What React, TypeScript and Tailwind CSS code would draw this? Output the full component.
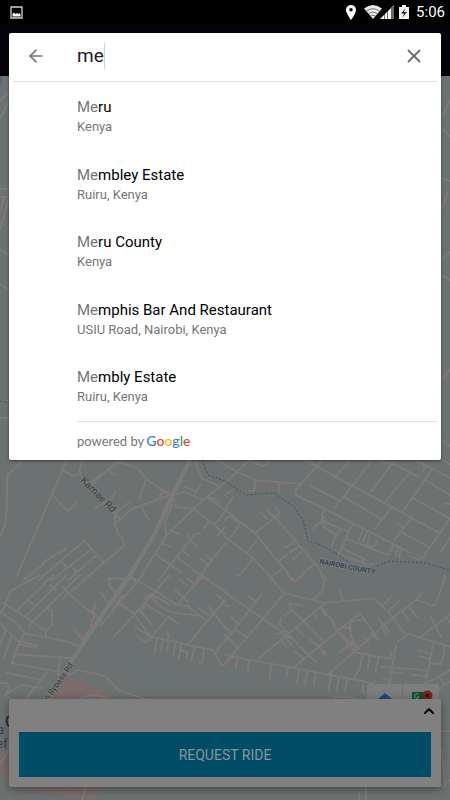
import { useState } from 'react';
import { ArrowLeft, ChevronUp, X } from 'lucide-react';

interface Place {
  match: string;
  rest: string;
  area: string;
}

const places: Place[] = [
  { match: 'Me', rest: 'ru', area: 'Kenya' },
  { match: 'Me', rest: 'mbley Estate', area: 'Ruiru, Kenya' },
  { match: 'Me', rest: 'ru County', area: 'Kenya' },
  { match: 'Me', rest: 'mphis Bar And Restaurant', area: 'USIU Road, Nairobi, Kenya' },
  { match: 'Me', rest: 'mbly Estate', area: 'Ruiru, Kenya' },
];

// Street lines, split into map tiles. Each tile is drawn at three times its size.
const westStreets =
  'M70 15L22 60L20 170L16 210L0 245 M200 15L52 360 M248 15L238 45L245 68 M190 48L220 62L242 58 M245 68L350 185 M352 20L280 85 M305 52L272 88 M328 47L345 62 M352 20L415 40L438 72L490 108L520 120 M438 72L418 132 M158 120L203 170L230 142 M345 108L338 130L285 158 M390 140L350 172 M345 175L345 205L352 230L370 255L372 272L310 325L250 375 M350 202L395 162L470 135L510 120 M425 152L432 172L447 195 M490 105L480 126L500 126 M345 175L358 190 M115 375L253 257L290 298L312 325 M70 375L130 328L130 322L198 280 M155 375L275 282 M185 320L200 338 M215 335L230 352 M290 300L205 375 M675 82L602 142L500 240L415 375 M585 20L605 70L640 85L660 98 M525 120L548 110L605 132 M525 150L535 158L580 160L675 237 M555 95L590 110 M600 90L585 115 M620 125L675 165 M622 125L655 135L655 145 M525 130L495 200L498 235 M510 225L540 238 M485 265L510 275 M470 295L475 305L545 352 M600 235L585 237L475 375 M560 238L575 260L592 275 M550 290L565 300 M535 308L620 375 M675 265L590 375 M615 298L635 315 M600 308L625 330 M675 170L655 198L640 208 M625 205L612 220 M650 15L675 30 M675 215L652 243';

const eastStreets =
  'M0 32L92 76L228 87 M90 76L88 108L74 108 M162 80L162 110 M0 85L75 15 M72 17L112 33L125 28L132 17 M292 15L212 105L213 120L300 162L555 293 M240 15L640 232 M375 18L328 68 M442 15L385 88L328 160 M502 25L438 110 M552 55L482 138 M502 25L582 66 M462 15L502 30 M255 92L340 135 M355 125L468 192 M448 223L502 155 M535 168L620 45 M570 15L675 68 M612 35L598 38L594 50 M605 78L675 120 M565 130L675 190 M652 15L675 28 M658 146L675 146 M560 190L508 255 M515 205L532 215 M530 232L610 275 M675 190L592 310L575 312L562 307 M675 250L648 290 M300 162L290 180L296 215L332 240L320 275 M290 200L272 212L268 224 M290 195L348 222L332 245 M348 222L370 228 M382 210L362 250L340 300 M362 250L408 268L490 300L505 270 M412 228L400 258 M435 238L425 270L440 275L452 270L455 258 M425 232L413 262 M518 278L512 303 M528 282L522 307 M352 280L418 312L410 322L350 300 M410 322L425 330L445 326 M0 165L90 235L205 375 M90 235L165 175L152 158 M105 170L125 192 M125 165L148 187 M148 185L270 325L305 375 M182 278L210 258 M195 292L220 275 M205 313L230 290 M265 328L215 375 M0 245L85 310L145 375 M0 270L45 207 M68 290L95 257 M160 320L187 297 M170 342L138 367 M85 310L50 355L35 362 M45 207L12 182L0 195 M0 165L25 125 M0 120L20 107 M655 375L660 360 M290 195L300 185';

const southWestStreets =
  'M120 0L30 48L12 98L0 115 M160 0L50 108 M200 0L75 125 M240 0L85 155 M272 0L190 70 M85 75L108 95 M150 30L165 45 M190 35L205 55L300 135 M12 85L75 125L138 168L155 150L157 108L138 102L105 132L90 150 M138 168L138 185 M0 110L50 145L75 175L190 197L240 213 M75 175L60 198L35 265 M60 198L112 212L108 220L60 208 M0 145L60 205 M18 165L0 208 M36 182L12 245 M48 238L215 250 M35 265L175 290 M180 245L175 300 M20 293L125 315 M142 292L75 375 M0 325L20 325L28 340L15 360L40 375 M15 360L62 330L130 340 M302 52L315 68L325 92 M325 10L330 35L355 62 M325 10L390 12 M288 85L278 112L290 122 M282 125L268 165L245 195 M222 162L245 190 M340 188L510 0 M300 152L430 0 M355 62L370 72 M400 115L352 80 M370 58L340 100 M405 12L470 50L530 90L562 92L618 138 M385 0L410 20 M610 0L535 85 M540 12L560 32 M562 10L582 25 M522 42L565 82 M605 0L675 50 M675 75L562 210 M595 98L625 120 M628 97L675 158 M652 60L675 82 M400 115L455 190L438 203L412 183 M405 155L452 185 M455 185L505 125L538 148 M430 75L455 58L508 88 M440 90L490 120 M450 60L478 92L515 112L595 122 M455 58L418 105L455 148 M435 90L425 110L448 140 M455 185L640 226L665 272L675 268 M470 195L463 235 M488 198L482 232 M505 205L500 230 M525 208L520 242 M543 212L536 250 M543 225L562 232L560 245 M583 218L575 255 M612 222L608 262L598 262 M500 170L507 185L500 198 M675 195L650 228 M190 296L215 298L232 284L315 302L355 346L445 375';

const southEastStreets =
  'M130 0L178 55L262 75L300 84L445 70L490 110L535 172L585 188L675 215 M178 55L0 265 M262 75L295 45L298 20L288 0 M188 0L208 22L235 0 M300 84L102 250 M345 48L352 75 M470 95L498 65 M490 108L522 78 M502 130L570 78L590 55 M570 75L605 84L620 94L632 88L662 5 M530 105L552 138 M552 95L578 128 M310 298L502 130 M0 52L198 190 M72 65L92 80 M110 58L0 200 M18 125L38 145 M30 162L65 188 M0 180L40 220 M0 155L20 172 M0 90L12 95 M192 85L235 92 M192 85L200 105L178 122 M200 105L235 138L292 195 M168 130L163 148L190 175 M155 178L180 168 M165 190L185 215 M178 182L200 212 M190 178L220 208 M215 160L235 180 M225 215L250 240L275 262 M208 228L235 252 M255 193L305 238 M280 210L300 242 M210 275L335 170L405 115L452 180 M290 100L300 122 M265 112L278 128 M288 97L325 140L330 160L392 232 M335 165L400 222L378 185L375 150L385 137L420 132 M355 155L372 160 M345 232L372 210L382 200 M365 212L378 210 M415 185L432 205 M458 130L495 172 M470 150L485 180 M440 175L462 195 M518 200L545 180 M390 232L495 252L500 230 M412 238L405 278L385 312 M435 240L428 282 M460 247L453 287 M513 212L490 340 M470 275L555 282 M490 290L532 295 M475 312L500 315 M0 238L25 245L430 322L445 325L448 315 M38 248L32 280 M72 257L68 288 M138 268L135 310 M188 278L184 303 M222 285L215 325 M247 290L240 328 M272 294L267 330 M318 302L311 343 M342 307L335 345 M367 312L360 345 M415 322L412 350L420 358 M625 205L600 330 M578 225L612 235 M582 244L615 252 M558 280L608 288 M558 298L608 305 M658 215L655 250L645 268L615 265 M675 285L560 350 M645 310L660 328 M675 320L630 350 M585 190L595 180L675 118 M615 122L648 185 M662 125L675 142 M0 265L25 245 M470 335L540 350L545 320 M325 375L335 365L370 365L405 375';

const edgeStreets =
  'M0 101L8 93 M0 118L8 103 M0 189H9 M0 197H9 M4 197L0 213 M8 200L2 225L0 229 M0 249L9 256 M0 284L9 290 M0 418H9 M450 101L441 118 M441 128L450 136 M441 178L450 181 M448 192L441 210 M450 252L441 260 M450 280L441 275 M450 370L441 380 M441 440L450 446 M420 731H450 M438 747L442 751L445 787 M366 787V800 M359 793V800 M450 780L442 787 M0 764L9 750 M86 787L82 800 M67 787L70 788';

function CityMap() {
  return (
    <svg
      className="min-h-0 w-full flex-1 bg-[#6c7171]"
      viewBox="0 76 450 724"
      preserveAspectRatio="xMidYMid slice"
      fill="none"
      strokeLinecap="round"
      strokeLinejoin="round"
      aria-hidden="true"
    >
      <path d="M0 76H2V85H0Z" fill="#4f687e" />
      <path d="M66 676L122 700L148 712V740L90 800L9 787L0 770V757Z" fill="#7c6c6a" />
      <g stroke="#7d7a79">
        <g transform="translate(0 455) scale(0.33333)" strokeWidth="6">
          <path d={westStreets} />
          <path d="M570 15L520 115L460 245L380 375" strokeWidth="13" stroke="#7c7b7a" />
        </g>
        <g transform="translate(225 455) scale(0.33333)" strokeWidth="6">
          <path d={eastStreets} />
        </g>
        <g transform="translate(0 575) scale(0.33333)" strokeWidth="6">
          <path d={southWestStreets} />
          <path d="M390 0L300 130L185 302L130 385" strokeWidth="13" stroke="#7c7b7a" />
          <path d="M240 370L270 360L300 362L330 375" />
        </g>
        <g transform="translate(225 575) scale(0.33333)" strokeWidth="6">
          <path d={southEastStreets} />
        </g>
        <path d={edgeStreets} strokeWidth="2" />
      </g>
      <path
        d="M0 401L9 403M202 460L208 475L225 481L246 495L274 493L294 507L303 520L308 541L319 544L340 556L349 563M377 566L389 561L425 563L450 570"
        stroke="#3e5051"
        strokeDasharray="2 2"
        strokeLinecap="butt"
      />
      <g className="font-[Roboto,sans-serif]" textAnchor="middle">
        <text transform="translate(96 497) rotate(45)" fontSize="10" fill="#3b3c3c" stroke="#777a7a" strokeWidth="2" paintOrder="stroke">
          Kamae Rd
        </text>
        <text transform="translate(347 569) rotate(11)" fontSize="7" fontWeight="700" fill="#304352" stroke="#777d80" strokeWidth="2" paintOrder="stroke">
          NAIROBI COUNTY
        </text>
        <text transform="translate(60 684) rotate(-55)" fontSize="8" fill="#3b3c3c" stroke="#777a7a" strokeWidth="2" paintOrder="stroke">
          rn Bypass Rd
        </text>
      </g>
      <g className="font-[Roboto,sans-serif]">
        <text x="5" y="727" fontSize="17" fill="#222">C</text>
        <text x="-3" y="734" fontSize="13" fill="#304352">a</text>
        <text x="-4" y="748" fontSize="13" fill="#304352">ef</text>
      </g>
    </svg>
  );
}

function MapShortcuts() {
  return (
    <svg className="mr-[2px] h-[15px] w-[72px] self-end" viewBox="0 0 72 15" aria-hidden="true">
      <path d="M0 15V1Q0 0 1 0H71Q72 0 72 1V15Z" fill="#7c7d7d" />
      <path d="M35.500 0V15" stroke="#707272" />
      <path d="M11 15L18 9L25 15Z" fill="#224585" />
      <path d="M45 8H62V15H45Z" fill="#07562c" />
      <path d="M51.500 10.500A2.300 2.300 0 1 0 52 13H50" fill="none" stroke="#889b8e" />
      <circle cx="60.500" cy="11.500" r="5" fill="#7b201a" />
      <circle cx="60.500" cy="11.500" r="1.700" fill="#360c0a" />
    </svg>
  );
}

function StatusBar() {
  return (
    <header className="flex h-6 shrink-0 items-center justify-between bg-black pr-[5px] pl-[10px] text-white">
      <svg className="h-[13px] w-[13px]" viewBox="0 0 13 13" aria-hidden="true">
        <path d="M1 1H12V12H1Z" fill="none" stroke="#d0d0d0" strokeWidth="1.300" />
        <path d="M2.500 10.500V8L4 6.500L5.500 8L7 7L8.500 8L9.500 7L10.500 8.500V10.500Z" fill="#fff" />
      </svg>
      <div className="flex items-center">
        <svg className="h-4 w-[66px]" viewBox="0 0 66 16" aria-hidden="true">
          <path d="M7 1C3.900 1 2 3.200 2 6C2 9.500 7 16 7 16S12 9.500 12 6C12 3.200 10.100 1 7 1ZM7 4A1.700 1.700 0 1 1 7 7.500A1.700 1.700 0 1 1 7 4Z" fill="#fff" fillRule="evenodd" />
          <path d="M20 4.500Q29 -2.500 38 4.500L29 15Z" fill="#e8e8e8" />
          <path d="M22.500 7Q29 2.500 35.500 7M24.500 9.500Q29 6.500 33.500 9.500M26.500 12Q29 10.500 31.500 12" fill="none" stroke="#555" strokeWidth="0.800" />
          <path d="M36 15L50 1V15Z" fill="#fff" />
          <path d="M47 4L50 1V15H47Z" fill="#666" />
          <path d="M40.500 10V15M43.500 7V15" stroke="#444" strokeWidth="0.800" />
          <path d="M55 3H58V1H62V3H65V15H55Z" fill="#f2f2f2" />
          <path d="M61.500 4.500L57 9.500H60L58.500 13.500L63 8H60Z" fill="#222" />
        </svg>
        <time className="pl-[6px] text-[15px] leading-6">5:06</time>
      </div>
    </header>
  );
}

function GoogleMark() {
  return (
    <span className="pl-[2px] font-[Lato,sans-serif] text-sm leading-4 font-medium">
      <span className="text-[#3b78e7]">G</span>
      <span className="text-[#ea4335]">o</span>
      <span className="text-[#fbbc05]">o</span>
      <span className="text-[#3b78e7]">g</span>
      <span className="text-[#34a853]">l</span>
      <span className="text-[#ea4335]">e</span>
    </span>
  );
}

function PlaceSearch() {
  const [query, setQuery] = useState('me');

  return (
    <section className="rounded-[2px] bg-white px-1 shadow-[0_1px_3px_rgba(0,0,0,0.5)]">
      <div className="flex h-[49px] items-center border-b border-[#dedede] pr-3 pb-[2px] pl-[13px]">
        <button type="button" aria-label="Back" className="text-[#737373]">
          <ArrowLeft className="h-[20px] w-[20px]" strokeWidth={2} />
        </button>
        <label className="flex flex-1 items-center pl-[31px]">
          <input
            type="text"
            aria-label="Search places"
            value={query}
            onChange={(e) => setQuery(e.target.value)}
            className="[field-sizing:content] max-w-full text-[19px] leading-6 text-[#212121] caret-transparent outline-none"
          />
          <span className="h-[26px] w-px bg-[#cfcfcf]" />
        </label>
        <button type="button" aria-label="Clear" className="text-[#6b6b6b]" onClick={() => setQuery('')}>
          <X className="h-[22px] w-[22px]" strokeWidth={2} />
        </button>
      </div>

      <ul className="pt-[15px]">
        {places.map((place) => (
          <li key={place.match + place.rest} className="h-[68px] even:h-[67px] last:h-[54px]">
            <button type="button" className="block w-full pl-16 text-left">
              <span className="block text-[15px] leading-5 text-black">
                <span className="text-[#757575]">{place.match}</span>
                {place.rest}
              </span>
              <span className="block text-[13px] leading-5 text-[#757575]">{place.area}</span>
            </button>
          </li>
        ))}
      </ul>

      <div className="ml-16 flex h-[39px] items-center border-t border-[#dedede] text-[13px] leading-4 text-[#757575]">
        <span className="font-[Lato,sans-serif]">powered by</span>
        <GoogleMark />
      </div>
    </section>
  );
}

function RideSheet() {
  return (
    <section className="rounded-[2px] bg-[#808080] px-[10px] pb-[10px] shadow-[0_2px_10px_rgba(0,0,0,0.4)]">
      <div className="flex h-[33px] justify-end">
        <button type="button" aria-label="Expand" className="-mr-[6px] self-start pt-1 text-black">
          <ChevronUp className="h-4 w-4" strokeWidth={3} />
        </button>
      </div>
      <button type="button" className="h-[45px] w-full bg-[#004d68] text-sm text-[#8a9499]">
        REQUEST RIDE
      </button>
    </section>
  );
}

export default function App() {
  return (
    <div className="relative flex min-h-screen flex-col font-[Roboto,sans-serif]">
      <div className="absolute inset-0 flex flex-col">
        <div className="h-[76px] shrink-0 bg-[#04020c]" />
        <CityMap />
      </div>
      <div className="relative flex flex-1 flex-col">
        <StatusBar />
        <main className="flex flex-1 flex-col justify-between px-[9px] pt-[9px] pb-[13px]">
          <PlaceSearch />
          <div className="flex flex-col">
            <MapShortcuts />
            <RideSheet />
          </div>
        </main>
      </div>
    </div>
  );
}
